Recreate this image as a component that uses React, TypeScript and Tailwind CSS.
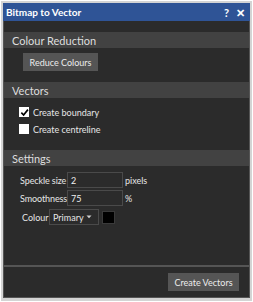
import React from "react";

const font = { fontFamily: 'Lato, "Noto Sans", sans-serif' };

function Header({ children }: { children: React.ReactNode }) {
  return (
    <div className="h-[16px] bg-[#424242] pl-[8px] flex items-center text-[11px] text-[#dedede] leading-none shrink-0 whitespace-nowrap">
      {children}
    </div>
  );
}

export default function App() {
  return (
    <div
      className="w-[253px] h-[302px] bg-[#d4d4d4] border border-white pl-[2px] pt-[2px] pr-[2px] pb-[3px] flex flex-col"
      style={font}
    >
      <div className="h-[18px] bg-[#2f5496] flex items-center justify-between pl-[3px] pr-[5px] shrink-0">
        <span className="text-white text-[10px] font-bold leading-none whitespace-nowrap">Bitmap to Vector</span>
        <div className="flex items-center gap-[7px] text-white text-[11px] font-bold leading-none">
          <span>?</span>
          <span>✕</span>
        </div>
      </div>
      <div className="flex-1 bg-[#2b2b2b] border-l border-r border-b border-[#555] flex flex-col text-[#e6e6e6]">
        <div className="h-[11px] shrink-0" />
        <Header>Colour Reduction</Header>
        <div className="pl-[19px] pt-[5px] flex">
          <button className="h-[18px] w-[75px] bg-[#555] text-[9px] text-[#ececec] leading-none flex items-center justify-center whitespace-nowrap">
            Reduce Colours
          </button>
        </div>
        <div className="h-[11px] shrink-0" />
        <Header>Vectors</Header>
        <div className="pl-[15px] pt-[9px] flex flex-col gap-[7px] text-[9px] leading-none">
          <label className="flex items-center gap-[4px] h-[10px]">
            <span className="w-[10px] h-[10px] bg-white flex items-center justify-center shrink-0">
              <svg width="9" height="9" viewBox="0 0 10 10">
                <path d="M1.5 5.2 L4 7.8 L8.8 1.8" stroke="#000" strokeWidth="1.8" fill="none" />
              </svg>
            </span>
            <span className="whitespace-nowrap">Create boundary</span>
          </label>
          <label className="flex items-center gap-[4px] h-[10px]">
            <span className="w-[10px] h-[10px] bg-white shrink-0" />
            <span className="whitespace-nowrap">Create centreline</span>
          </label>
        </div>
        <div className="h-[16px] shrink-0" />
        <Header>Settings</Header>
        <div className="pl-[16px] pt-[6px] flex flex-col gap-[2px] text-[9px] leading-none">
          <div className="flex items-center">
            <span className="w-[47px] whitespace-nowrap tracking-[-0.1px]">Speckle size</span>
            <div className="w-[56px] h-[16px] border border-[#4a4a4a] flex items-center pl-[3px] text-[#f0f0f0]">2</div>
            <span className="ml-[2px]">pixels</span>
          </div>
          <div className="flex items-center">
            <span className="w-[47px] whitespace-nowrap tracking-[-0.1px]">Smoothness</span>
            <div className="w-[56px] h-[16px] border border-[#4a4a4a] flex items-center pl-[3px] text-[#f0f0f0]">75</div>
            <span className="ml-[2px]">%</span>
          </div>
          <div className="flex items-center pl-[2px] mt-[1px]">
            <span className="w-[27px] whitespace-nowrap">Colour</span>
            <div className="w-[50px] h-[16px] border border-[#4a4a4a] flex items-center justify-between pl-[3px] pr-[6px]">
              <span className="whitespace-nowrap">Primary</span>
              <svg width="6" height="4" viewBox="0 0 6 4" className="shrink-0">
                <path d="M0.5 0.5 L5.5 0.5 L3 3.2 Z" fill="#d0d0d0" />
              </svg>
            </div>
            <div className="ml-[3px] w-[13px] h-[13px] bg-black border border-[#3a3a3a]" />
          </div>
        </div>
        <div className="flex-1" />
        <div className="h-[2px] bg-[#555] shrink-0" />
        <div className="h-[30px] flex items-start justify-end pr-[10px] pt-[6px] shrink-0">
          <button className="h-[18px] w-[71px] bg-[#555] text-[9px] text-[#ececec] leading-none flex items-center justify-center whitespace-nowrap">
            Create Vectors
          </button>
        </div>
      </div>
    </div>
  );
}
